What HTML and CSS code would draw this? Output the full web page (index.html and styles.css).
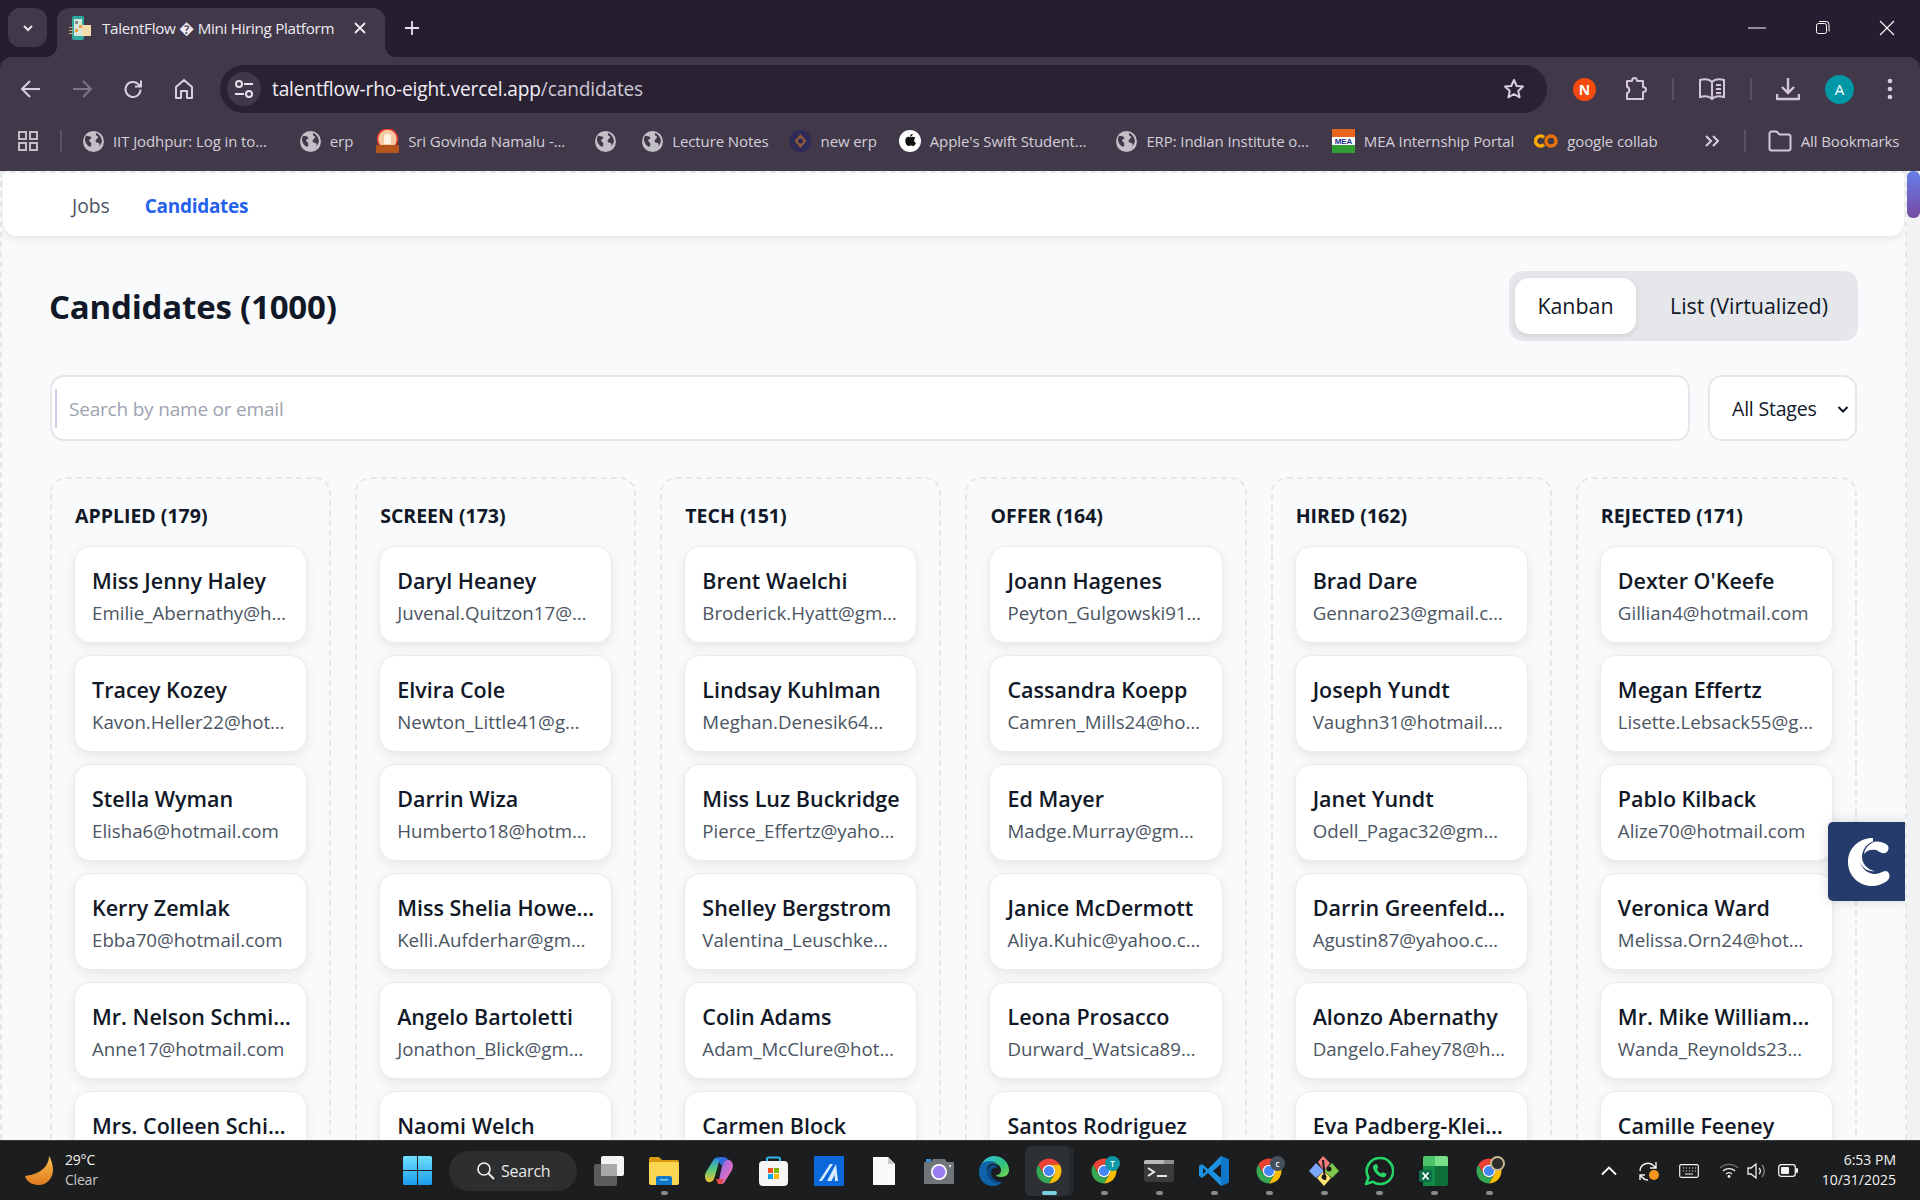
FILE: index.html
```html
<!DOCTYPE html>
<html lang="en">
<head>
    <meta charset="UTF-8">
    <meta name="viewport" content="width=device-width, initial-scale=1.0">
    <title>TalentFlow Candidates</title>
    <link rel="stylesheet" href="styles.css">
</head>
<body>
    <svg class="defs" width="0" height="0">
        <defs>
            <symbol id="chrome" viewBox="0 0 48 48">
                <path fill="#ea4335" d="M41.32 14A20 20 0 0 0 6.68 14L15.34 29A10 10 0 0 1 24 14Z"/>
                <path fill="#fbbc04" d="M24 44A20 20 0 0 0 41.32 14L24 14A10 10 0 0 1 32.66 29Z"/>
                <path fill="#34a853" d="M6.68 14A20 20 0 0 0 24 44L32.66 29A10 10 0 0 1 15.34 29Z"/>
                <circle cx="24" cy="24" r="10" fill="#fff"/>
                <circle cx="24" cy="24" r="8" fill="#4285f4"/>
            </symbol>
            <symbol id="globe" viewBox="0 0 20 20">
                <circle cx="10" cy="10" r="10" fill="#c2bfc7"/>
                <path fill="#413949" d="M3 4.500c2 .6 3.600.4 4.600 1.300 1 1-.2 2-1.200 2.400-1 .5-.7 1.700.4 2.300 1.400.7 1.200 2 .9 3.200-.2 1-.9 1.700-1.700 1.100C4 13.500 2 11 1.800 8 2 6.500 2.400 5.400 3 4.500zM12.500 1.800c-.4 1.400-.1 2.500 1 3 1.200.5 1.100 1.500.1 2.300-1.200 1-2.200 2.300-1.300 3.400.8 1 2.500.4 3.300 1.300.6.700.2 2-.8 3.400 1.600-1.100 3-3.500 3.200-5.600 0-3.300-2.400-6.700-5.500-7.800z"/>
            </symbol>
        </defs>
    </svg>

    <header class="browser-top">
        <div class="tabstrip">
            <div class="tab-search">
                <svg width="14" height="14" viewBox="0 0 14 14"><path d="M3 5l4 4 4-4" fill="none" stroke="#e8e2ee" stroke-width="2"/></svg>
            </div>
            <div class="tab">
                <svg class="tab-favicon" width="24" height="24" viewBox="0 0 24 24">
                    <rect x="3" y="0" width="12" height="24" rx="2" fill="#2fa8a0"/>
                    <rect x="5" y="3" width="8" height="17" fill="#d8e4dc"/>
                    <rect x="6" y="5" width="3" height="3" fill="#7a8b92"/>
                    <rect x="10" y="9" width="3" height="3" fill="#e8a33a"/>
                    <rect x="6" y="13" width="3" height="3" fill="#e8a33a"/>
                    <path d="M13 9h9v11h-9z" fill="#f3dcae"/>
                    <path d="M0 11h4v1H0zM0 14h4v1H0zM0 17h4v1H0z" fill="#c9a878"/>
                </svg>
                <span class="tab-title">TalentFlow � Mini Hiring Platform</span>
                <svg class="tab-close" width="12" height="12" viewBox="0 0 12 12"><path d="M1 1l10 10M11 1L1 11" stroke="#f0ebf4" stroke-width="1.800"/></svg>
            </div>
            <svg class="new-tab" width="16" height="16" viewBox="0 0 16 16"><path d="M8 1v14M1 8h14" stroke="#e8e2ee" stroke-width="1.800"/></svg>
            <div class="win-controls">
                <svg width="20" height="20" viewBox="0 0 20 20"><path d="M1 10h18" stroke="#fff" stroke-width="1"/></svg>
                <svg width="20" height="20" viewBox="0 0 20 20"><rect x="4.500" y="5.500" width="10" height="10" rx="2" fill="none" stroke="#fff"/><path d="M7 3.500h7a3 3 0 0 1 3 3v7" fill="none" stroke="#fff"/></svg>
                <svg width="20" height="20" viewBox="0 0 20 20"><path d="M3 3l14 14M17 3L3 17" stroke="#fff" stroke-width="1.100"/></svg>
            </div>
        </div>

        <div class="toolbar">
            <div class="nav-icons">
                <svg width="22" height="22" viewBox="0 0 22 22"><path d="M20 11H3M10 3l-8 8 8 8" fill="none" stroke="#d8cfe0" stroke-width="2"/></svg>
                <svg width="22" height="22" viewBox="0 0 22 22"><path d="M2 11h17M12 3l8 8-8 8" fill="none" stroke="#7d7587" stroke-width="2"/></svg>
                <svg width="22" height="22" viewBox="0 0 22 22"><path d="M18.500 11.500a7.500 7.500 0 1 1-2.300-5.400L19 8.500M19 2.500v6h-6" fill="none" stroke="#d8cfe0" stroke-width="2"/></svg>
                <svg width="22" height="22" viewBox="0 0 22 22"><path d="M3 20V9l8-7 8 7v11h-5v-7H8v7z" fill="none" stroke="#d8cfe0" stroke-width="2" stroke-linejoin="round"/></svg>
            </div>
            <div class="omnibox">
                <div class="site-info">
                    <svg width="20" height="20" viewBox="0 0 20 20"><circle cx="5" cy="5" r="3" fill="none" stroke="#e6e0ec" stroke-width="2"/><path d="M10 5h9M1 15h9" stroke="#e6e0ec" stroke-width="2"/><circle cx="15" cy="15" r="3" fill="none" stroke="#e6e0ec" stroke-width="2"/></svg>
                </div>
                <span class="url">talentflow-rho-eight.vercel.app<span class="url-path">/candidates</span></span>
                <svg class="star" width="22" height="22" viewBox="0 0 22 22"><path d="M11 2l2.700 6 6.300.6-4.800 4.300 1.400 6.400L11 16l-5.600 3.300 1.400-6.400L2 8.600 8.300 8z" fill="none" stroke="#d8cfe0" stroke-width="2" stroke-linejoin="round"/></svg>
            </div>
            <div class="tool-icons">
                <span class="ext-n">N</span>
                <svg class="ext-puzzle" width="24" height="26" viewBox="0 0 24 26"><path d="M3 5h5c0-4 5-4 5 0h6v6c4 0 4 5 0 5v7H3v-6c3 0 3-6 0-6z" fill="none" stroke="#d3c6de" stroke-width="2" stroke-linejoin="round"/></svg>
                <span class="tool-sep"></span>
                <svg class="ext-reader" width="28" height="24" viewBox="0 0 28 24"><path d="M14 5C11 2 6 2 2 3v17c4-1 9-1 12 2 3-3 8-3 12-2V3c-4-1-9-1-12 2zM14 5v17M18 8h5M18 12h5M18 16h5" fill="none" stroke="#d3c6de" stroke-width="2"/></svg>
                <span class="tool-sep"></span>
                <svg class="ext-download" width="24" height="24" viewBox="0 0 24 24"><path d="M12 1v15M6 10l6 6 6-6" fill="none" stroke="#d3c6de" stroke-width="2.400"/><path d="M1 17v5h22v-5" fill="none" stroke="#d3c6de" stroke-width="2.400" stroke-linejoin="round"/></svg>
                <span class="avatar">A</span>
                <svg class="ext-dots" width="6" height="22" viewBox="0 0 6 22"><circle cx="3" cy="3" r="2.300" fill="#d8cfe0"/><circle cx="3" cy="11" r="2.300" fill="#d8cfe0"/><circle cx="3" cy="19" r="2.300" fill="#d8cfe0"/></svg>
            </div>
        </div>

        <div class="bookmarks">
            <svg class="bm-apps" width="20" height="20" viewBox="0 0 20 20"><path d="M1 1h7v7H1zM12 1h7v7h-7zM1 12h7v7H1zM12 12h7v7h-7z" fill="none" stroke="#c2bfc7" stroke-width="2"/></svg>
            <span class="bm-sep"></span>
            <div class="bm bm-iit"><svg width="21" height="21"><use href="#globe"/></svg><span>IIT Jodhpur: Log in to...</span></div>
            <div class="bm bm-erp"><svg width="21" height="21"><use href="#globe"/></svg><span>erp</span></div>
            <div class="bm bm-sri">
                <svg width="23" height="24" viewBox="0 0 23 24"><circle cx="11.500" cy="10" r="10" fill="#f6c9a0" stroke="#e5372b" stroke-width="1.500"/><path d="M8 15V7c0-3 7-3 7 0v8z" fill="#fff2e0"/><rect y="16" width="23" height="8" fill="#b5561d"/></svg>
                <span>Sri Govinda Namalu -...</span>
            </div>
            <div class="bm bm-blank"><svg width="21" height="21"><use href="#globe"/></svg></div>
            <div class="bm bm-lecture"><svg width="21" height="21"><use href="#globe"/></svg><span>Lecture Notes</span></div>
            <div class="bm bm-newerp">
                <svg width="23" height="24" viewBox="0 0 23 24"><circle cx="11.500" cy="12" r="11" fill="#2f2a58"/><path d="M11.500 5l6 7-6 7-6-7z" fill="#8a5a3a"/><circle cx="11.500" cy="12" r="2.500" fill="#2f2a58"/></svg>
                <span>new erp</span>
            </div>
            <div class="bm bm-apple">
                <svg width="22" height="22" viewBox="0 0 22 22"><circle cx="11" cy="11" r="11" fill="#fff"/><path fill="#111" d="M11.200 7.300c.9-.1 1.900-.7 2.900-.6 1.100.1 1.900.6 2.400 1.300-2 1.300-1.700 4 .4 5-.5 1.300-1.400 3-2.600 3-.9 0-1.300-.6-2.400-.6s-1.500.6-2.400.6c-1.500 0-3.200-3-3.200-5.300 0-2.500 1.600-4 3.200-4 .9 0 1.500.6 1.700.6zM11 6.700c0-1.500 1.200-2.900 2.700-3 .1 1.600-1.200 3-2.700 3z"/></svg>
                <span>Apple's Swift Student...</span>
            </div>
            <div class="bm bm-ierp"><svg width="21" height="21"><use href="#globe"/></svg><span>ERP: Indian Institute o...</span></div>
            <div class="bm bm-mea">
                <svg width="23" height="24" viewBox="0 0 23 24"><rect width="23" height="8" fill="#e8641c"/><rect y="8" width="23" height="8" fill="#fff"/><rect y="16" width="23" height="8" fill="#2f9e35"/><text x="11.500" y="15" text-anchor="middle" class="mea-text">MEA</text></svg>
                <span>MEA Internship Portal</span>
            </div>
            <div class="bm bm-colab">
                <svg width="24" height="14" viewBox="0 0 24 14"><path d="M10 3.400a5 5 0 1 0 0 7.200" fill="none" stroke="#f9ab00" stroke-width="3.500"/><circle cx="17" cy="7" r="5" fill="none" stroke="#e8710a" stroke-width="3.500"/></svg>
                <span>google collab</span>
            </div>
            <svg class="bm-more" width="16" height="14" viewBox="0 0 16 14"><path d="M2 2l5 5-5 5M9 2l5 5-5 5" fill="none" stroke="#d8cfe0" stroke-width="2"/></svg>
            <span class="bm-sep bm-sep-right"></span>
            <div class="bm bm-all">
                <svg width="24" height="22" viewBox="0 0 24 22"><path d="M1.500 3.500a2 2 0 0 1 2-2h5l3 3h9a2 2 0 0 1 2 2v12a2 2 0 0 1-2 2h-17a2 2 0 0 1-2-2z" fill="none" stroke="#d3c6de" stroke-width="2"/></svg>
                <span>All Bookmarks</span>
            </div>
        </div>
    </header>

    <div class="viewport">
        <div class="page">
            <nav class="topnav">
                <a class="topnav-link">Jobs</a>
                <a class="topnav-link active">Candidates</a>
            </nav>
            <main class="content">
                <div class="page-head">
                    <h1>Candidates (1000)</h1>
                    <div class="view-switch">
                        <button class="switch-btn selected">Kanban</button>
                        <button class="switch-btn">List (Virtualized)</button>
                    </div>
                </div>
                <div class="filters">
                    <div class="search-box"><span class="search-caret"></span><span class="search-hint">Search by name or email</span></div>
                    <div class="stage-select">
                        <span>All Stages</span>
                        <svg width="14" height="14" viewBox="0 0 14 14"><path d="M2.500 5l4.500 4.500L11.500 5" fill="none" stroke="#111827" stroke-width="2"/></svg>
                    </div>
                </div>
                <div class="board">
                    <section class="column">
                        <h2>APPLIED (179)</h2>
                        <div class="card"><div class="card-name">Miss Jenny Haley</div><div class="card-mail">Emilie_Abernathy@h…</div></div>
                        <div class="card"><div class="card-name">Tracey Kozey</div><div class="card-mail">Kavon.Heller22@hot…</div></div>
                        <div class="card"><div class="card-name">Stella Wyman</div><div class="card-mail">Elisha6@hotmail.com</div></div>
                        <div class="card"><div class="card-name">Kerry Zemlak</div><div class="card-mail">Ebba70@hotmail.com</div></div>
                        <div class="card"><div class="card-name">Mr. Nelson Schmi…</div><div class="card-mail">Anne17@hotmail.com</div></div>
                        <div class="card"><div class="card-name">Mrs. Colleen Schi…</div></div>
                    </section>
                    <section class="column">
                        <h2>SCREEN (173)</h2>
                        <div class="card"><div class="card-name">Daryl Heaney</div><div class="card-mail">Juvenal.Quitzon17@…</div></div>
                        <div class="card"><div class="card-name">Elvira Cole</div><div class="card-mail">Newton_Little41@g…</div></div>
                        <div class="card"><div class="card-name">Darrin Wiza</div><div class="card-mail">Humberto18@hotm…</div></div>
                        <div class="card"><div class="card-name">Miss Shelia Howe…</div><div class="card-mail">Kelli.Aufderhar@gm…</div></div>
                        <div class="card"><div class="card-name">Angelo Bartoletti</div><div class="card-mail">Jonathon_Blick@gm…</div></div>
                        <div class="card"><div class="card-name">Naomi Welch</div></div>
                    </section>
                    <section class="column">
                        <h2>TECH (151)</h2>
                        <div class="card"><div class="card-name">Brent Waelchi</div><div class="card-mail">Broderick.Hyatt@gm…</div></div>
                        <div class="card"><div class="card-name">Lindsay Kuhlman</div><div class="card-mail">Meghan.Denesik64…</div></div>
                        <div class="card"><div class="card-name">Miss Luz Buckridge</div><div class="card-mail">Pierce_Effertz@yaho…</div></div>
                        <div class="card"><div class="card-name">Shelley Bergstrom</div><div class="card-mail">Valentina_Leuschke…</div></div>
                        <div class="card"><div class="card-name">Colin Adams</div><div class="card-mail">Adam_McClure@hot…</div></div>
                        <div class="card"><div class="card-name">Carmen Block</div></div>
                    </section>
                    <section class="column">
                        <h2>OFFER (164)</h2>
                        <div class="card"><div class="card-name">Joann Hagenes</div><div class="card-mail">Peyton_Gulgowski91…</div></div>
                        <div class="card"><div class="card-name">Cassandra Koepp</div><div class="card-mail">Camren_Mills24@ho…</div></div>
                        <div class="card"><div class="card-name">Ed Mayer</div><div class="card-mail">Madge.Murray@gm…</div></div>
                        <div class="card"><div class="card-name">Janice McDermott</div><div class="card-mail">Aliya.Kuhic@yahoo.c…</div></div>
                        <div class="card"><div class="card-name">Leona Prosacco</div><div class="card-mail">Durward_Watsica89…</div></div>
                        <div class="card"><div class="card-name">Santos Rodriguez</div></div>
                    </section>
                    <section class="column">
                        <h2>HIRED (162)</h2>
                        <div class="card"><div class="card-name">Brad Dare</div><div class="card-mail">Gennaro23@gmail.c…</div></div>
                        <div class="card"><div class="card-name">Joseph Yundt</div><div class="card-mail">Vaughn31@hotmail.…</div></div>
                        <div class="card"><div class="card-name">Janet Yundt</div><div class="card-mail">Odell_Pagac32@gm…</div></div>
                        <div class="card"><div class="card-name">Darrin Greenfeld…</div><div class="card-mail">Agustin87@yahoo.c…</div></div>
                        <div class="card"><div class="card-name">Alonzo Abernathy</div><div class="card-mail">Dangelo.Fahey78@h…</div></div>
                        <div class="card"><div class="card-name">Eva Padberg-Klei…</div></div>
                    </section>
                    <section class="column">
                        <h2>REJECTED (171)</h2>
                        <div class="card"><div class="card-name">Dexter O'Keefe</div><div class="card-mail">Gillian4@hotmail.com</div></div>
                        <div class="card"><div class="card-name">Megan Effertz</div><div class="card-mail">Lisette.Lebsack55@g…</div></div>
                        <div class="card"><div class="card-name">Pablo Kilback</div><div class="card-mail">Alize70@hotmail.com</div></div>
                        <div class="card"><div class="card-name">Veronica Ward</div><div class="card-mail">Melissa.Orn24@hot…</div></div>
                        <div class="card"><div class="card-name">Mr. Mike William…</div><div class="card-mail">Wanda_Reynolds23…</div></div>
                        <div class="card"><div class="card-name">Camille Feeney</div></div>
                    </section>
                </div>
            </main>
            <div class="float-badge">
                <svg width="46" height="50" viewBox="0 0 46 50"><path fill="#fff" d="M26 1C12 1 1 11 1 25s11 24 24 24c5 0 11-2 15-5 4-3 3-9-1-10-4 0-6 3-11 3-7 0-13-5-15-12 3 7 9 10 15 9-7-1-13-7-13-14 0-7 4-13 12-16-1 0-1 0-1 0zM27 5c-5 2-9 6-10 12 3-4 7-5 12-4 3 1 5 4 9 3 4-1 5-7 1-9-4-2-8-3-12-2z"/></svg>
            </div>
        </div>
        <div class="scrollbar"><div class="scrollbar-thumb"></div></div>
    </div>

    <footer class="taskbar">
        <div class="weather">
            <svg width="28" height="30" viewBox="0 0 28 30"><defs><linearGradient id="moon" x1="0" y1="0" x2="0" y2="1"><stop offset="0" stop-color="#f7c04a"/><stop offset="1" stop-color="#e07a1f"/></linearGradient></defs><path fill="url(#moon)" d="M24 0C24 10 16 18 0 20 2 27 9 29 14 29 22 29 28 22 28 14 28 8 26 3 24 0Z"/></svg>
            <div class="weather-text"><span>29°C</span><span class="weather-sub">Clear</span></div>
        </div>
        <div class="task-icons">
            <div class="task-item">
                <svg width="29" height="29" viewBox="0 0 29 29"><defs><linearGradient id="win" x1="0" y1="0" x2="0" y2="1"><stop offset="0" stop-color="#6fe0ff"/><stop offset="1" stop-color="#1b9dee"/></linearGradient></defs><path fill="url(#win)" d="M0 1.500A1.500 1.500 0 0 1 1.500 0H14v14H0zM15 0h12.500A1.500 1.500 0 0 1 29 1.500V14H15zM0 15h14v14H1.500A1.500 1.500 0 0 1 0 27.500zM15 15h14v12.500a1.500 1.500 0 0 1-1.500 1.500H15z"/></svg>
            </div>
            <div class="task-search">
                <svg width="19" height="19" viewBox="0 0 19 19"><circle cx="8" cy="8" r="6" fill="none" stroke="#f2f2f2" stroke-width="1.600"/><path d="M12.500 12.500L18 18" stroke="#f2f2f2" stroke-width="1.800"/></svg>
                <span>Search</span>
            </div>
            <div class="task-item">
                <svg width="30" height="30" viewBox="0 0 30 30"><rect x="0" y="8" width="23" height="22" rx="2" fill="#5c5c5c"/><rect x="7" y="0" width="23" height="20" rx="2" fill="#f3f3f3"/><rect x="7" y="8" width="16" height="12" fill="#a9a9a9"/></svg>
            </div>
            <div class="task-item running">
                <svg width="30" height="28" viewBox="0 0 30 28"><path d="M0 2a2 2 0 0 1 2-2h8l3 3h15a2 2 0 0 1 2 2v3H0z" fill="#d99a12"/><rect y="5" width="30" height="23" rx="2" fill="#fcd652"/><path d="M7 21a2 2 0 0 1 2-2h12a2 2 0 0 1 2 2v7H7z" fill="#0f78c8"/><rect x="11" y="22" width="8" height="1.500" fill="#8cc8f0"/></svg>
            </div>
            <div class="task-item">
                <svg width="28" height="28" viewBox="0 0 28 28"><defs><linearGradient id="cop" x1="0" y1="0" x2="1" y2="1"><stop offset="0" stop-color="#7b6cf0"/><stop offset=".6" stop-color="#d66cc8"/><stop offset="1" stop-color="#f58a5a"/></linearGradient><linearGradient id="cop2" x1="0" y1="0" x2="0" y2="1"><stop offset="0" stop-color="#2f8fe0"/><stop offset=".5" stop-color="#5cc97a"/><stop offset="1" stop-color="#f2c230"/></linearGradient></defs><path fill="url(#cop)" d="M19 26C16 28 13 27 14 23L17 9C18 4 21 2 24 3 28 4 29 9 27 13Z"/><path fill="#e04a4a" d="M11 22h8l-2 5h-4z"/><path fill="url(#cop2)" d="M9 2C12 0 15 1 14 5L10 19C9 24 6 26 3 25 0 24-1 19 1 15Z"/><path fill="#2f6fe0" d="M9 2C11 0 14 0 17 0 20 0 22 1 24 3 21 2 18 4 17 9L14 5C14 2 12 1 9 2Z"/></svg>
            </div>
            <div class="task-item">
                <svg width="29" height="30" viewBox="0 0 29 30"><path d="M8 6V3a1.500 1.500 0 0 1 1.500-1.500h10A1.500 1.500 0 0 1 21 3v3" fill="none" stroke="#2fb6e8" stroke-width="2"/><rect y="5" width="29" height="25" rx="4" fill="#f5f5f5"/><rect x="9" y="12" width="5" height="5" fill="#f25022"/><rect x="15" y="12" width="5" height="5" fill="#7fba00"/><rect x="9" y="18" width="5" height="5" fill="#00a4ef"/><rect x="15" y="18" width="5" height="5" fill="#ffb900"/></svg>
            </div>
            <div class="task-item">
                <svg width="30" height="30" viewBox="0 0 30 30"><rect width="30" height="30" fill="#0a68d8"/><path d="M5 25L16 8h3L8 25zM13 25L22 8l2 17h-3l-.5-6-3 6z" fill="#d8ecff"/></svg>
            </div>
            <div class="task-item">
                <svg width="22" height="28" viewBox="0 0 22 28"><path d="M0 0h15l7 7v21H0z" fill="#fafafa"/><path d="M15 0l7 7h-7z" fill="#c9c9c9"/></svg>
            </div>
            <div class="task-item">
                <svg width="30" height="26" viewBox="0 0 30 26"><path d="M0 5a1 1 0 0 1 1-1h6l2-3h12l2 3h6a1 1 0 0 1 1 1v21H0z" fill="#70757a"/><rect x="2" y="1" width="5" height="3" fill="#3a8ed8"/><circle cx="15" cy="14" r="8" fill="#fff"/><circle cx="15" cy="14" r="6.300" fill="#9a7cf0"/><circle cx="26" cy="8" r="1.200" fill="#d9d9d9"/></svg>
            </div>
            <div class="task-item">
                <svg width="30" height="30" viewBox="0 0 30 30"><defs><linearGradient id="edge" x1="0" y1="0" x2="1" y2="1"><stop offset="0" stop-color="#2fc2e8"/><stop offset=".6" stop-color="#31c27c"/><stop offset="1" stop-color="#7fd84a"/></linearGradient></defs><path fill="url(#edge)" d="M15 0c8 0 15 6 15 14 0 5-4 7-8 7-3 0-5-1-5-2 3 0 5-2 5-5 0-4-4-7-9-7-6 0-11 4-13 9C1 7 7 0 15 0z"/><path fill="#0f62a8" d="M0 16C0 8 5 5 11 5c3 0 5 1 7 3-7-2-11 2-10 8 1 7 7 12 15 10-3 3-6 4-9 4C6 30 0 24 0 16z"/><path fill="#0c4a86" d="M8 16c0-5 4-8 8-7 2 .5 3 2 2 3-3-1-6 1-6 5 0 5 6 9 11 9-1 1-3 1-4 1-6 0-11-5-11-11z"/></svg>
            </div>
            <div class="task-item active">
                <svg width="30" height="30"><use href="#chrome"/></svg>
            </div>
            <div class="task-item running">
                <svg width="30" height="30"><use href="#chrome"/></svg>
                <span class="profile-dot teal">T</span>
            </div>
            <div class="task-item running">
                <svg width="30" height="22" viewBox="0 0 30 22"><rect width="30" height="22" rx="2" fill="#3b3b3b"/><path d="M0 2a2 2 0 0 1 2-2h18v4H0z" fill="#b9b9b9"/><rect x="20" width="10" height="4" fill="#8f8f8f"/><path d="M4 8l6 4-6 4" fill="none" stroke="#e6e6e6" stroke-width="2"/><rect x="13" y="15" width="10" height="2" fill="#e6e6e6"/></svg>
            </div>
            <div class="task-item running">
                <svg width="30" height="30" viewBox="0 0 30 30"><path d="M22 0l8 3.500v23L22 30 9 17l-6 5-3-2v-10l3-2 6 5z" fill="#1e90e0"/><path d="M22 0l8 3.500v23L22 30z" fill="#0d78c8"/><path d="M22 8l-8 7 8 7z" fill="#1b1b1b"/><path d="M4 12v6l3-3z" fill="#1b1b1b"/></svg>
            </div>
            <div class="task-item running">
                <svg width="30" height="30"><use href="#chrome"/></svg>
                <span class="profile-dot slate">c</span>
            </div>
            <div class="task-item running">
                <svg width="30" height="30" viewBox="0 0 30 30"><path d="M15 15L7 7 0 15l7 7z" fill="#7da7ff"/><path d="M15 15l8-8 7 8-7 7z" fill="#7fc84a"/><path d="M15 15l-7 7 7 8 7-8z" fill="#ffe070"/><path d="M15 15l-6-9 5-6 7 7z" fill="#f27c7c"/><path d="M14 4l2 20" stroke="#1b1b1b" stroke-width="2"/><circle cx="15" cy="21" r="2.500" fill="#1b1b1b"/><circle cx="20" cy="13" r="2.500" fill="#1b1b1b"/></svg>
            </div>
            <div class="task-item running">
                <svg width="30" height="30" viewBox="0 0 30 30"><path d="M15.500 2A13 13 0 0 0 4.500 21.500L2 28l6.800-2.300A13 13 0 1 0 15.500 2z" fill="none" stroke="#25d366" stroke-width="2.600" stroke-linejoin="round"/><path d="M10.500 8.500l2.300-.5 1.500 3.500-1.300 1.700c1 2 2.300 3.300 4.300 4.300l1.700-1.300 3.500 1.500-.5 2.300c-1 1.300-3 1.600-4.500 1-4-1.500-7-4.500-8.300-8.300-.5-1.700 0-3.500 1.300-4.200z" fill="#25d366"/></svg>
            </div>
            <div class="task-item running">
                <svg width="30" height="30" viewBox="0 0 30 30"><path d="M4 2a2 2 0 0 1 2-2h10v10H4z" fill="#4cc56a"/><path d="M16 0h11a2 2 0 0 1 2 2v8H16z" fill="#7adf8a"/><rect x="4" y="10" width="12" height="20" fill="#128a45"/><path d="M16 10h13v18a2 2 0 0 1-2 2H16z" fill="#0d6e38"/><rect y="14" width="13" height="12" rx="2" fill="#0d6b45"/><path d="M3.500 16.500l6 7M9.500 16.500l-6 7" stroke="#fff" stroke-width="1.800"/></svg>
            </div>
            <div class="task-item running">
                <svg width="30" height="30"><use href="#chrome"/></svg>
                <span class="profile-dot photo"></span>
            </div>
        </div>
        <div class="tray">
            <svg class="tray-chevron" width="16" height="10" viewBox="0 0 16 10"><path d="M1 8.500l7-7 7 7" fill="none" stroke="#fff" stroke-width="1.800"/></svg>
            <svg class="tray-sync" width="22" height="22" viewBox="0 0 22 22"><path d="M2 11a8 8 0 0 1 14-5l2 2M18 2v6h-6M18 14" fill="none" stroke="#f2f2f2" stroke-width="1.400"/><path d="M10 20a8 8 0 0 1-6-3l-2-1.500M2 20v-5h5" fill="none" stroke="#f2f2f2" stroke-width="1.400"/><circle cx="16" cy="15" r="5" fill="#f7941d"/></svg>
            <svg class="tray-keys" width="20" height="14" viewBox="0 0 20 14"><rect x=".7" y=".7" width="18.600" height="12.600" rx="1.500" fill="none" stroke="#f2f2f2" stroke-width="1.200"/><path d="M4 4h1M7 4h1M10 4h1M13 4h1M16 4h1M4 7h1M7 7h1M10 7h1M13 7h1M16 7h1M6 10h8" stroke="#f2f2f2" stroke-width="1.200"/></svg>
            <svg class="tray-wifi" width="20" height="15" viewBox="0 0 20 15"><path d="M1 5a13 13 0 0 1 18 0" fill="none" stroke="#777" stroke-width="1.300"/><path d="M4 8a9 9 0 0 1 12 0M7 11a4.500 4.500 0 0 1 6 0" fill="none" stroke="#f2f2f2" stroke-width="1.300"/><circle cx="10" cy="13.500" r="1.400" fill="#f2f2f2"/></svg>
            <svg class="tray-vol" width="20" height="18" viewBox="0 0 20 18"><path d="M1 6h3l5-4v14l-5-4H1z" fill="none" stroke="#f2f2f2" stroke-width="1.300"/><path d="M12 6a4 4 0 0 1 0 6" fill="none" stroke="#f2f2f2" stroke-width="1.300"/><path d="M15 3a9 9 0 0 1 0 12" fill="none" stroke="#888" stroke-width="1.300"/></svg>
            <svg class="tray-batt" width="20" height="13" viewBox="0 0 20 13"><rect x=".7" y=".7" width="16.600" height="11.600" rx="2.500" fill="none" stroke="#f2f2f2" stroke-width="1.300"/><rect x="3" y="3" width="8" height="7" rx="1" fill="#f2f2f2"/><rect x="18" y="4" width="2" height="5" rx="1" fill="#f2f2f2"/></svg>
            <div class="clock"><span>6:53 PM</span><span>10/31/2025</span></div>
        </div>
    </footer>
</body>
</html>
```

FILE: styles.css
```css
* {
    box-sizing: border-box;
}

body {
    display: flex;
    flex-direction: column;
    height: 100vh;
    margin: 0;
    overflow: hidden;
    font-family: "Open Sans", "Noto Sans", sans-serif;
    background-color: #f9fafb;
    color: #111827;
}

.defs {
    position: absolute;
}

/* browser chrome */
.browser-top {
    background-color: #251d30;
    flex-shrink: 0;
}

.tabstrip {
    display: flex;
    align-items: flex-end;
    height: 57px;
    padding-left: 8px;
}

.tab-search {
    display: flex;
    align-items: center;
    justify-content: center;
    width: 39px;
    height: 39px;
    margin-bottom: 10px;
    border-radius: 12px;
    background-color: #413949;
}

.tab {
    position: relative;
    display: flex;
    align-items: center;
    width: 328px;
    height: 49px;
    margin-left: 10px;
    padding-left: 12px;
    padding-bottom: 9px;
    border-radius: 12px 12px 0 0;
    background-color: #413949;
}

.tab::before,
.tab::after {
    content: "";
    position: absolute;
    bottom: 0;
    width: 12px;
    height: 12px;
}

.tab::before {
    left: -12px;
    background: radial-gradient(circle at 0 0, transparent 12px, #413949 12.5px);
}

.tab::after {
    right: -12px;
    background: radial-gradient(circle at 100% 0, transparent 12px, #413949 12.5px);
}

.tab-favicon {
    flex-shrink: 0;
}

.tab-title {
    margin-left: 9px;
    font-size: 15.2px;
    letter-spacing: -0.3px;
    color: #efeaf3;
    white-space: nowrap;
}

.tab-close {
    margin-left: 20px;
    flex-shrink: 0;
}

.new-tab {
    margin: 0 0 21px 19px;
}

.win-controls {
    display: flex;
    align-self: flex-start;
    gap: 45px;
    margin: 18px 23px 0 auto;
}

.toolbar {
    display: flex;
    align-items: center;
    height: 56px;
    padding-top: 8px;
    background-color: #413949;
    border-radius: 12px 12px 0 0;
}

.nav-icons {
    display: flex;
    gap: 29px;
    width: 220px;
    padding-left: 20px;
}

.omnibox {
    display: flex;
    align-items: center;
    width: 1327px;
    height: 48px;
    padding: 0 22px 0 7px;
    border-radius: 24px;
    background-color: #2a2233;
}

.site-info {
    display: flex;
    align-items: center;
    justify-content: center;
    width: 34px;
    height: 34px;
    border-radius: 50%;
    background-color: #413949;
}

.url {
    margin-left: 11px;
    font-size: 19.1px;
    letter-spacing: -0.15px;
    color: #f2eef6;
}

.url-path {
    color: #cfc8d6;
}

.star {
    margin-left: auto;
}

.tool-icons {
    display: flex;
    align-items: center;
    flex: 1;
    padding-left: 26px;
}

.ext-n {
    display: flex;
    align-items: center;
    justify-content: center;
    width: 23px;
    height: 23px;
    border-radius: 50%;
    background-color: #f4490f;
    color: #fff;
    font-size: 14px;
    font-weight: 700;
}

.ext-puzzle {
    margin-left: 28px;
}

.tool-sep {
    width: 2px;
    height: 22px;
    background-color: #5a5262;
}

.ext-puzzle + .tool-sep {
    margin-left: 24px;
}

.ext-reader {
    margin-left: 24px;
}

.ext-reader + .tool-sep {
    margin-left: 24px;
}

.ext-download {
    margin-left: 24px;
}

.avatar {
    display: flex;
    align-items: center;
    justify-content: center;
    width: 29px;
    height: 29px;
    margin-left: 25px;
    border-radius: 50%;
    background-color: #0097a7;
    color: #fff;
    font-size: 15px;
}

.ext-dots {
    margin-left: 33px;
}

.bookmarks {
    display: flex;
    align-items: center;
    height: 58px;
    padding-left: 18px;
    padding-bottom: 2px;
    overflow: hidden;
    background-color: #413949;
}

.bookmarks > * {
    flex-shrink: 0;
}

.bm-sep {
    width: 2px;
    height: 22px;
    margin-left: 22px;
    background-color: #5a5262;
}

.bm {
    display: flex;
    align-items: center;
    gap: 9px;
    font-size: 15px;
    letter-spacing: -0.1px;
    color: #d4cfd9;
    white-space: nowrap;
}

.bm svg {
    flex-shrink: 0;
}

.bm-iit {
    margin-left: 21px;
}

.bm-erp {
    margin-left: 33px;
}

.bm-sri {
    margin-left: 23px;
}

.bm-blank {
    margin-left: 30px;
}

.bm-lecture {
    margin-left: 26px;
}

.bm-newerp {
    margin-left: 20px;
}

.bm-apple {
    margin-left: 22px;
}

.bm-ierp {
    margin-left: 30px;
}

.bm-mea {
    margin-left: 23px;
}

.bm-colab {
    margin-left: 20px;
}

.bm-more {
    margin-left: 46px;
}

.bm-sep-right {
    margin-left: 24px;
}

.bm-all {
    margin-left: 22px;
}

.mea-text {
    font-family: "Liberation Sans", sans-serif;
    font-size: 8px;
    font-weight: 700;
    fill: #1a2a8a;
}

/* page */
.viewport {
    display: flex;
    flex: 1;
    min-height: 0;
}

.page {
    position: relative;
    flex: 1;
    min-width: 0;
    overflow: hidden;
    border: 2px dashed #e5e7eb;
    border-bottom: 0;
}

.topnav {
    display: flex;
    align-items: center;
    gap: 35px;
    height: 63px;
    margin: 0 1px;
    padding: 2px 0 0 69px;
    border-radius: 0 0 14px 14px;
    background-color: #fff;
    box-shadow: 0 2px 10px rgba(0, 0, 0, 0.1);
}

.topnav-link {
    font-size: 19.3px;
    color: #4b5563;
}

.topnav-link.active {
    font-size: 19px;
    font-weight: 700;
    letter-spacing: -0.3px;
    color: #2563eb;
}

.content {
    padding: 35px 48px 0 48px;
}

.page-head {
    display: flex;
    align-items: center;
    justify-content: space-between;
}

h1 {
    margin: 0 0 0 -1px;
    font-size: 33px;
    font-weight: 700;
    letter-spacing: -0.2px;
    color: #111827;
}

.view-switch {
    display: flex;
    gap: 8px;
    width: 349px;
    height: 70px;
    margin-right: -1px;
    padding: 7px 6px;
    border-radius: 14px;
    background-color: #e5e7eb;
}

.switch-btn {
    padding: 0 26px 2px;
    border: 0;
    border-radius: 14px;
    background: none;
    font-family: inherit;
    font-size: 21.4px;
    color: #111827;
    white-space: nowrap;
}

.switch-btn.selected {
    flex-shrink: 0;
    width: 121px;
    padding: 0 0 2px;
    background-color: #fff;
    box-shadow: 0 2px 6px rgba(0, 0, 0, 0.1);
}

.filters {
    display: flex;
    gap: 18px;
    margin-top: 34px;
}

.search-box {
    display: flex;
    align-items: center;
    flex: 1;
    height: 66px;
    padding: 1px 0 0 3px;
    border: 2px solid #e5e7eb;
    border-radius: 14px;
    background-color: #fff;
}

.search-caret {
    width: 2px;
    height: 39px;
    background-color: #cfcdeb;
}

.search-hint {
    margin-left: 12px;
    font-size: 19px;
    letter-spacing: -0.2px;
    color: #9ca3af;
}

.stage-select {
    display: flex;
    align-items: center;
    justify-content: space-between;
    width: 149px;
    height: 66px;
    padding: 1px 5px 0 22px;
    border: 2px solid #e5e7eb;
    border-radius: 14px;
    background-color: #fff;
    font-size: 19.5px;
    letter-spacing: -0.2px;
    white-space: nowrap;
}

.board {
    display: grid;
    grid-template-columns: repeat(6, minmax(0, 1fr));
    gap: 24px;
    margin-top: 36px;
}

.column {
    display: flex;
    flex-direction: column;
    gap: 13px;
    min-width: 0;
    height: 900px;
    padding: 0 22px;
    border: 2px dashed #e5e7eb;
    border-radius: 16px;
}

.column h2 {
    margin: 24px 0 4px 1px;
    font-size: 19.5px;
    font-weight: 700;
    line-height: 26px;
    color: #111827;
    white-space: nowrap;
}

.card {
    flex-shrink: 0;
    min-height: 97px;
    padding: 19px 17px 0;
    border: 1px solid #e9ebee;
    border-radius: 16px;
    background-color: #fff;
    box-shadow: 0 4px 12px rgba(0, 0, 0, 0.08);
    overflow: hidden;
    white-space: nowrap;
}

.column .card {
    margin-bottom: -1px;
}

.card-name {
    font-size: 21.5px;
    font-weight: 600;
    line-height: 30px;
    color: #111827;
}

.card-mail {
    margin-top: 4px;
    font-size: 18.7px;
    line-height: 26px;
    color: #4b5563;
}

.float-badge {
    position: absolute;
    top: 649px;
    right: -2px;
    display: flex;
    align-items: center;
    justify-content: center;
    width: 79px;
    height: 79px;
    padding-left: 4px;
    border-radius: 5px 0 0 5px;
    background-color: #243b6b;
    box-shadow: 0 0 12px rgba(0, 0, 0, 0.15);
}

.scrollbar {
    width: 13px;
    background-color: #f1f2f4;
    flex-shrink: 0;
}

.scrollbar-thumb {
    height: 47px;
    border-radius: 6px;
    background: linear-gradient(180deg, #667eea, #764ba2);
}

/* windows taskbar */
.taskbar {
    position: relative;
    display: flex;
    align-items: center;
    height: 60px;
    background-color: #1c1d1e;
    border-top: 1px solid #3a3a3a;
    flex-shrink: 0;
}

.weather {
    display: flex;
    align-items: center;
    gap: 12px;
    width: 390px;
    padding-left: 25px;
}

.weather-text {
    display: flex;
    flex-direction: column;
    margin-top: -2px;
    font-size: 14px;
    line-height: 20px;
    letter-spacing: -0.2px;
    color: #f2f2f2;
}

.weather-sub {
    color: #c8c8c8;
}

.task-icons {
    display: flex;
    align-items: center;
}

.task-item {
    position: relative;
    display: flex;
    align-items: center;
    justify-content: center;
    width: 55px;
    height: 50px;
}

.task-item svg {
    position: relative;
}

.task-item.running::after,
.task-item.active::after {
    content: "";
    position: absolute;
    bottom: 1px;
    left: 50%;
    width: 7px;
    height: 4px;
    margin-left: -3px;
    border-radius: 2px;
    background-color: #8a8a8a;
}

.task-item.active::before {
    content: "";
    position: absolute;
    top: 0;
    left: 4px;
    width: 44px;
    height: 50px;
    border-radius: 6px;
    background-color: #2d3136;
    box-shadow: 5px 0 0 #26292d;
}

.task-item.active::after {
    width: 15px;
    margin-left: -7px;
    background-color: #76d3e0;
}

.profile-dot {
    position: absolute;
    top: 10px;
    left: 29px;
    display: flex;
    align-items: center;
    justify-content: center;
    width: 15px;
    height: 15px;
    border-radius: 50%;
    font-size: 8px;
    font-weight: 600;
    color: #fff;
}

.profile-dot.teal {
    background-color: #0e97a5;
}

.profile-dot.slate {
    background-color: #44505c;
}

.profile-dot.photo {
    border: 2px solid #c9b88c;
    background-color: #2c2c2c;
}

.task-search {
    display: flex;
    align-items: center;
    gap: 6px;
    width: 128px;
    height: 40px;
    margin: 0 4px 0 4px;
    padding-left: 27px;
    border-radius: 20px;
    background-color: #2d2e2f;
    font-size: 16px;
    letter-spacing: -0.2px;
    color: #e8e8e8;
}

.tray {
    display: flex;
    align-items: center;
    flex: 1;
    justify-content: flex-end;
    padding-right: 24px;
}

.tray-sync {
    margin-left: 21px;
}

.tray-keys {
    margin-left: 19px;
}

.tray-wifi {
    margin-left: 20px;
}

.tray-vol {
    margin-left: 8px;
}

.tray-batt {
    margin-left: 11px;
}

.clock {
    display: flex;
    flex-direction: column;
    align-items: flex-end;
    margin: -2px 0 0 24px;
    font-size: 14px;
    line-height: 20px;
    color: #f2f2f2;
}
```
